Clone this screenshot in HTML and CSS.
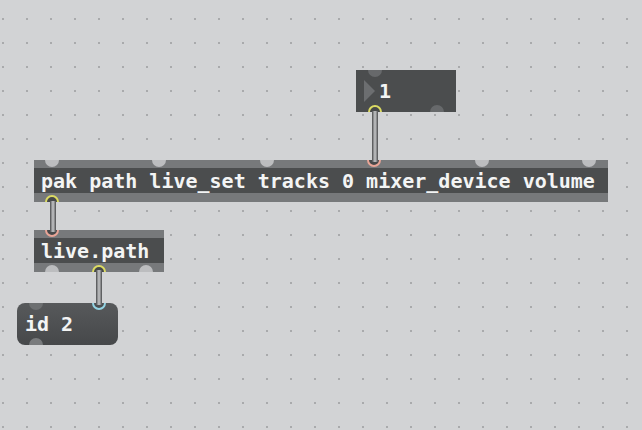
FILE: index.html
```html
<!DOCTYPE html>
<html>
<head>
<meta charset="utf-8">
<link rel="stylesheet" href="styles.css">
</head>
<body>
<div class="patcher">
  <div class="obj numbox">
    <span class="port in p-num-in"></span>
    <svg class="tri" width="11" height="22" viewBox="0 0 11 22"><polygon points="0,0 11,11 0,22" fill="#6c6e70"/></svg>
    <span class="label">1</span>
    <span class="port out ring-y p-num-out1"></span>
    <span class="port out p-num-out2"></span>
  </div>

  <div class="obj banded pak">
    <span class="port in lt p-in1"></span>
    <span class="port in lt p-in2"></span>
    <span class="port in lt p-in3"></span>
    <span class="port in ring-p p-in4"></span>
    <span class="port in lt p-in5"></span>
    <span class="port in lt p-in6"></span>
    <span class="label">pak path live_set tracks 0 mixer_device volume</span>
    <span class="port out ring-y p-out1"></span>
  </div>

  <div class="obj banded livepath">
    <span class="port in ring-p p-lp-in"></span>
    <span class="label">live.path</span>
    <span class="port out lt p-lp-out1"></span>
    <span class="port out ring-y p-lp-out2"></span>
    <span class="port out lt p-lp-out3"></span>
  </div>

  <div class="obj message">
    <span class="port in msg p-msg-in"></span>
    <span class="port in ring-c p-msg-in2"></span>
    <span class="label">id 2</span>
    <span class="port out msg2 p-msg-out"></span>
  </div>

  <div class="cord cord-a"></div>
  <div class="cord cord-b"></div>
  <div class="cord cord-c"></div>
</div>
</body>
</html>
```

FILE: styles.css
```css
html, body {
  margin: 0;
  padding: 0;
}

body {
  width: 642px;
  height: 430px;
  overflow: hidden;
  background: #d2d3d5;
}

.patcher {
  position: relative;
  width: 642px;
  height: 430px;
  background-color: #d2d3d5;
  background-image:
    linear-gradient(to bottom, transparent 0 2px, #d2d3d5 2px 24px),
    linear-gradient(to right, #a9aaac 0 2px, #d2d3d5 2px 24px);
  background-size: 24px 24px, 24px 24px;
  background-position: 2px 18px, 2px 18px;
}

.obj {
  position: absolute;
  height: 42px;
  box-sizing: border-box;
  overflow: hidden;
  display: flex;
  align-items: center;
  background: #4b4d4e;
}

.banded {
  background: linear-gradient(to bottom, #77797b 0 8px, #4b4d4e 8px 33px, #77797b 33px 42px);
}

.label {
  font-family: "DejaVu Sans Mono", "Liberation Mono", monospace;
  font-weight: bold;
  font-size: 20px;
  line-height: 42px;
  color: #f3f4f4;
  white-space: nowrap;
  position: relative;
}

.banded .label {
  padding-left: 7px;
}

.numbox {
  left: 356px;
  top: 70px;
  width: 100px;
  padding-left: 8px;
  gap: 4px;
}

.tri {
  display: block;
  flex: none;
}

.pak {
  left: 34px;
  top: 160px;
  width: 574px;
}

.livepath {
  left: 34px;
  top: 230px;
  width: 130px;
}

.message {
  left: 17px;
  top: 303px;
  width: 101px;
  border-radius: 8px;
  background: linear-gradient(to bottom, #57595b, #46484a);
}

.message .label {
  padding-left: 8px;
}

/* inlets / outlets */
.port {
  position: absolute;
  width: 14px;
  height: 14px;
  border-radius: 50%;
  box-sizing: border-box;
  background: #67696b;
}

.port.in { top: -7px; }
.port.out { bottom: -7px; }

.port.lt { background: #bcbdbf; }
.port.msg { background: #6d6f71; }
.port.msg2 { background: #797b7d; }

.ring-y { background: #47494a; border: 2px solid #dcdb62; }
.ring-p { background: #47494a; border: 2px solid #e9a597; }
.ring-c { background: #4e5052; border: 2px solid #93d3e3; }

.p-num-in  { left: 12px; }
.p-num-out1 { left: 12px; }
.p-num-out2 { left: 74px; }

.p-in1 { left: 11px; }
.p-in2 { left: 118px; }
.p-in3 { left: 226px; }
.p-in4 { left: 333px; }
.p-in5 { left: 441px; }
.p-in6 { left: 548px; }
.p-out1 { left: 11px; }

.p-lp-in { left: 11px; }
.p-lp-out1 { left: 11px; }
.p-lp-out2 { left: 58px; }
.p-lp-out3 { left: 105px; }

.p-msg-in  { left: 12px; }
.p-msg-in2 { left: 75px; }
.p-msg-out { left: 12px; }

/* patch cords */
.cord {
  position: absolute;
  width: 6px;
  background: linear-gradient(to right,
    #5f6062 0 1px,
    #8c8d8f 1px 2px,
    #b2b3b5 2px 4px,
    #8c8d8f 4px 5px,
    #5f6062 5px 6px);
}

.cord-a {
  left: 372px;
  top: 111px;
  height: 51px;
}

.cord-b {
  left: 50px;
  top: 201px;
  height: 31px;
}

.cord-c {
  left: 96px;
  top: 270px;
  height: 35px;
}
```
